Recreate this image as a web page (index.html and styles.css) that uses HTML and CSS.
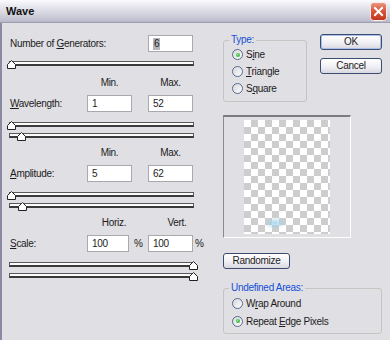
FILE: index.html
```html
<!DOCTYPE html>
<html lang="en">
<head>
    <meta charset="UTF-8">
    <meta name="viewport" content="width=device-width, initial-scale=1.0">
    <title>Wave</title>
    <link rel="stylesheet" href="styles.css">
</head>
<body>
    <div class="window">
        <div class="titlebar">
            <span class="title">Wave</span>
            <span class="close">
                <svg width="17" height="19" viewBox="0 0 17 19">
                    <defs>
                        <linearGradient id="closeGrad" x1="0" y1="0" x2="0" y2="1">
                            <stop offset="0" stop-color="#ec9a84"/>
                            <stop offset="0.45" stop-color="#d9573c"/>
                            <stop offset="1" stop-color="#c0341c"/>
                        </linearGradient>
                    </defs>
                    <rect x="0.5" y="0.5" width="16" height="18" rx="3" fill="url(#closeGrad)" stroke="#f4f0f0"/>
                    <path d="M5 6l7 7M12 6l-7 7" stroke="#fff" stroke-width="2" stroke-linecap="square"/>
                </svg>
            </span>
        </div>

        <div class="dialog">
            <!-- left: numeric parameters -->
            <div class="params">
                <div class="row gen">
                    <span class="lbl span3">Number of <u>G</u>enerators:</span>
                    <span class="box"><span class="sel">6</span></span>
                </div>
                <div class="track t-gen"><span class="thumb" style="left: -3px"></span></div>

                <div class="heads h-first"><span class="c2">Min.</span><span class="c4">Max.</span></div>
                <div class="row">
                    <span class="lbl"><u>W</u>avelength:</span>
                    <span class="box c2">1</span>
                    <span class="box c4">52</span>
                </div>
                <div class="track t-a"><span class="thumb" style="left: -3px"></span></div>
                <div class="track t-b"><span class="thumb" style="left: 7px"></span></div>

                <div class="heads"><span class="c2">Min.</span><span class="c4">Max.</span></div>
                <div class="row">
                    <span class="lbl"><u>A</u>mplitude:</span>
                    <span class="box c2">5</span>
                    <span class="box c4">62</span>
                </div>
                <div class="track t-a"><span class="thumb" style="left: -3px"></span></div>
                <div class="track t-b"><span class="thumb" style="left: 8px"></span></div>

                <div class="heads shifted"><span class="c2">Horiz.</span><span class="c4">Vert.</span></div>
                <div class="row">
                    <span class="lbl"><u>S</u>cale:</span>
                    <span class="box c2 short">100</span>
                    <span class="pct">%</span>
                    <span class="box c4">100</span>
                    <span class="pct last">%</span>
                </div>
                <div class="track t-a"><span class="thumb" style="left: 179px"></span></div>
                <div class="track t-b"><span class="thumb" style="left: 179px"></span></div>
            </div>

            <!-- right: type, buttons, preview -->
            <div class="side">
                <div class="top">
                    <fieldset class="group type">
                        <legend>Type:</legend>
                        <label class="opt"><span class="radio on"></span><span>S<u>i</u>ne</span></label>
                        <label class="opt"><span class="radio"></span><span><u>T</u>riangle</span></label>
                        <label class="opt"><span class="radio"></span><span>S<u>q</u>uare</span></label>
                    </fieldset>
                    <div class="buttons">
                        <span class="btn default">OK</span>
                        <span class="btn">Cancel</span>
                    </div>
                </div>

                <div class="preview">
                    <div class="checker"><span class="blob"></span></div>
                </div>

                <span class="btn randomize">Randomize</span>

                <fieldset class="group areas">
                    <legend>Undefined Areas:</legend>
                    <label class="opt"><span class="radio"></span><span>W<u>r</u>ap Around</span></label>
                    <label class="opt"><span class="radio on"></span><span>Repeat <u>E</u>dge Pixels</span></label>
                </fieldset>
            </div>
        </div>
    </div>
</body>
</html>
```

FILE: styles.css
```css
* {
    box-sizing: border-box;
}

body {
    margin: 0;
    font-family: 'Liberation Sans', Arial, sans-serif;
    font-size: 10px;
    letter-spacing: -0.3px;
    color: #1c1c1c;
    background-color: #e0dfe3;
}

.window {
    width: 390px;
    height: 340px;
    overflow: hidden;
    background-color: #e0dfe3;
}

.titlebar {
    height: 23px;
    display: flex;
    align-items: center;
    justify-content: space-between;
    padding: 0 3px 0 6px;
    background: linear-gradient(#fbfbfd 0%, #e6e6ee 30%, #d3d3df 65%, #b8b8ca 100%);
    border-bottom: 1px solid #9c9cb2;
}

.title {
    font-size: 11px;
    font-weight: bold;
    letter-spacing: 0;
    color: #111;
}

.close svg {
    display: block;
}

.dialog {
    display: flex;
    height: 317px;
    padding-left: 7px;
    border-left: 2px solid #8a8aa2;
}

/* ---- left column ---- */

.params {
    width: 197px;
    display: flex;
    flex-direction: column;
}

.row,
.heads {
    display: grid;
    grid-template-columns: 78px 45px 16px 45px 13px;
    align-items: center;
}

.row {
    height: 17px;
    margin-top: 6px;
}

.row.gen {
    margin-top: 12px;
}

.lbl {
    grid-column: 1;
    padding-left: 1px;
}

.lbl.span3 {
    grid-column: 1 / 4;
}

.c2 {
    grid-column: 2;
}

.c4 {
    grid-column: 4;
}

.box {
    height: 17px;
    line-height: 15px;
    padding-left: 4px;
    background-color: #fff;
    border: 1px solid #a9a8ae;
}

.row.gen .box {
    grid-column: 4;
}

.box.short {
    width: 42px;
}

.sel {
    display: inline-block;
    padding: 0 1px;
    line-height: 12px;
    background-color: #b4b4bc;
}

.pct {
    grid-column: 3;
    padding-left: 2px;
}

.pct.last {
    grid-column: 5;
    padding-left: 2px;
}

.heads {
    height: 12px;
    line-height: 12px;
    margin-top: 9px;
}

.heads.h-first {
    margin-top: 11px;
}

.heads span {
    text-align: center;
}

.heads.shifted .c2 {
    padding-left: 9px;
}

.heads.shifted .c4 {
    padding-left: 13px;
}

.track {
    position: relative;
    width: 185px;
    height: 5px;
    background-color: #fbfbfb;
    border: 1px solid #585858;
    border-bottom: 2px solid #3a3a3a;
}

.track.t-gen {
    margin-top: 9px;
}

.track.t-a {
    margin-top: 10px;
}

.track.t-b {
    margin-top: 6px;
}

.thumb {
    position: absolute;
    top: -2px;
    width: 9px;
    height: 9px;
    background: url("data:image/svg+xml,%3Csvg xmlns='http://www.w3.org/2000/svg' width='9' height='9'%3E%3Cpath d='M0.5 8.5V4.5L4.5 0.5L8.5 4.5V8.5Z' fill='%23fff' stroke='%23222'/%3E%3C/svg%3E");
}

/* ---- right column ---- */

.side {
    width: 159px;
    margin-left: 17px;
    padding-top: 11px;
    display: flex;
    flex-direction: column;
    align-items: flex-start;
}

.top {
    display: flex;
    align-items: flex-start;
}

.group {
    margin: 0;
    padding: 0 0 4px 5px;
    border: 1px solid #c6c4c0;
    border-radius: 3px;
}

.group legend {
    padding: 0 2px;
    line-height: 12px;
    color: #1450d8;
}

.group.type {
    width: 84px;
}

.group.areas {
    width: 159px;
    margin-top: 13px;
    padding-bottom: 3px;
}

.opt {
    display: flex;
    align-items: center;
    height: 17px;
    padding-left: 3px;
}

.group.areas .opt {
    height: 18px;
}

.radio {
    width: 11px;
    height: 11px;
    margin-right: 3px;
    border: 1px solid #566b8c;
    border-radius: 50%;
    background: linear-gradient(135deg, #d8d8dc, #fdfdfd);
    display: flex;
    align-items: center;
    justify-content: center;
}

.radio.on::after {
    content: "";
    width: 4px;
    height: 4px;
    border-radius: 50%;
    background: radial-gradient(circle at 40% 40%, #7fe07f, #1f9d1f);
}

.buttons {
    width: 62px;
    margin-left: 13px;
    display: flex;
    flex-direction: column;
    gap: 8px;
}

.btn {
    display: block;
    height: 16px;
    line-height: 14px;
    text-align: center;
    border: 1px solid #3c4c70;
    border-radius: 3px;
    background: linear-gradient(#ffffff, #f0eff4 55%, #d9d8e0);
}

.btn.default {
    box-shadow: inset 0 0 0 1px #a8c0ea;
}

.preview {
    width: 128px;
    height: 123px;
    margin-top: 13px;
    padding: 3px 0 0 20px;
    border-style: solid;
    border-width: 2px 1px 1px 1px;
    border-color: #7c7c80 #fdfdfd #fdfdfd #8a8a8e;
}

.checker {
    position: relative;
    width: 86px;
    height: 114px;
    background: conic-gradient(#cdcdcd 25%, #fff 0 50%, #cdcdcd 0 75%, #fff 0) 0 0 / 14px 14px;
}

.blob {
    position: absolute;
    left: 20px;
    top: 97px;
    width: 22px;
    height: 12px;
    border-radius: 50%;
    background: radial-gradient(ellipse, rgba(160, 210, 236, 0.9), rgba(190, 225, 240, 0) 75%);
}

.btn.randomize {
    width: 67px;
    margin-top: 15px;
}
```
